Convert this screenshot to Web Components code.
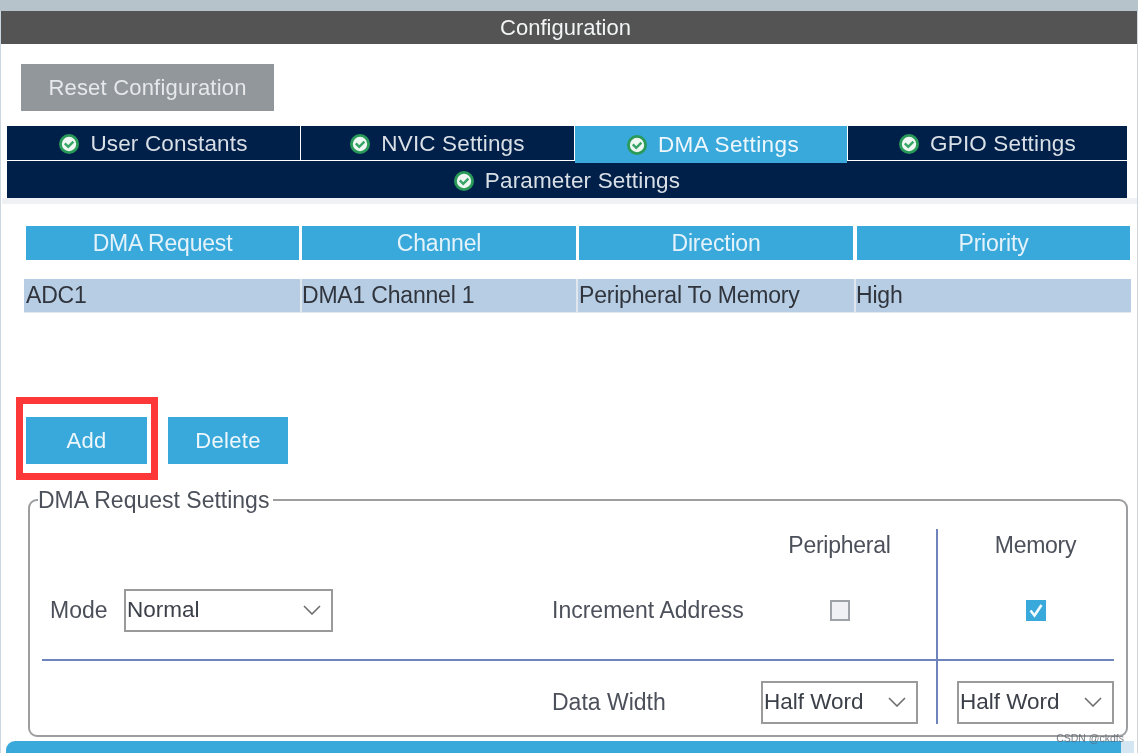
<!DOCTYPE html>
<html>
<head>
<meta charset="utf-8">
<title>Configuration</title>
<style>
  html, body { margin: 0; padding: 0; background: #fff; }
  body { width: 1138px; height: 753px; overflow: hidden; font-family: "Liberation Sans", Arial, sans-serif; }
</style>
</head>
<body>
<cube-config></cube-config>

<script>
class StatusIcon extends HTMLElement {
  connectedCallback() {
    this.attachShadow({ mode: 'open' });
    this.shadowRoot.innerHTML = `
      <style>
        :host { display: inline-block; width: 20px; height: 20px; line-height: 0; }
      </style>
      <svg width="20" height="20" viewBox="0 0 20 20">
        <circle cx="10" cy="10" r="10" fill="#2a9a58"/>
        <circle cx="10" cy="10" r="7.2" fill="#eef7f2"/>
        <path d="M5.8 9.4l3.4 3.4 5.2-5.2" fill="none" stroke="#35a466" stroke-width="2.4"/>
      </svg>`;
  }
}
customElements.define('status-icon', StatusIcon);

class CfgButton extends HTMLElement {
  connectedCallback() {
    this.attachShadow({ mode: 'open' });
    this.shadowRoot.innerHTML = `
      <style>
        :host {
          display: flex; align-items: center; justify-content: center;
          width: var(--w, 121px); height: 47px;
          background: var(--bg, #39a9dc);
          color: var(--fg, #eef7fc);
          font-size: 22px;
          letter-spacing: var(--ls, .35px);
        }
      </style>
      <slot></slot>`;
  }
}
customElements.define('cfg-button', CfgButton);

class CfgTab extends HTMLElement {
  connectedCallback() {
    this.attachShadow({ mode: 'open' });
    this.shadowRoot.innerHTML = `
      <style>
        :host {
          display: flex; align-items: center; justify-content: center; gap: 11px;
          box-sizing: border-box;
          padding-top: 2px;
          background: #012049;
          color: #d9dfe6;
          font-size: 22.5px;
          letter-spacing: .15px;
        }
        :host([active]) {
          background: #39a9dc;
          color: #eef7fc;
          margin-bottom: -3px;
          padding: 0 0 0 4px;
          letter-spacing: .4px;
          position: relative;
        }
      </style>
      <status-icon></status-icon><span><slot></slot></span>`;
  }
}
customElements.define('cfg-tab', CfgTab);

class CfgTabs extends HTMLElement {
  connectedCallback() {
    this.attachShadow({ mode: 'open' });
    this.shadowRoot.innerHTML = `
      <style>
        :host {
          display: grid;
          grid-template-columns: 293px 273px 272px 279px;
          grid-template-rows: 34px 37px;
          gap: 1px;
          margin: 15px 0 0 6px;
          width: 1120px;
        }
        .wide { grid-column: 1 / -1; }
      </style>
      <cfg-tab>User Constants</cfg-tab>
      <cfg-tab>NVIC Settings</cfg-tab>
      <cfg-tab active>DMA Settings</cfg-tab>
      <cfg-tab>GPIO Settings</cfg-tab>
      <cfg-tab class="wide">Parameter Settings</cfg-tab>`;
  }
}
customElements.define('cfg-tabs', CfgTabs);

class DmaTable extends HTMLElement {
  connectedCallback() {
    this.attachShadow({ mode: 'open' });
    this.shadowRoot.innerHTML = `
      <style>
        :host { display: block; margin: 22px 0 0 23px; width: 1107px; font-size: 23px; letter-spacing: -.2px; }
        .head {
          display: grid;
          grid-template-columns: 273px 274px 274px 273px;
          column-gap: 3px;
          margin-left: 2px;
          height: 34px;
          color: #e4f2fa;
        }
        .head div {
          background: #39a9dc;
          display: flex; align-items: center; justify-content: center;
        }
        .head div:last-child { margin-left: 1px; margin-right: -1px; }
        .row {
          display: grid;
          grid-template-columns: 276px 274px 276px 1fr;
          column-gap: 2px;
          margin-top: 19px;
          height: 33px;
          background: #dfe6ee;
          box-shadow: 0 1px 0 #e4e9f0;
          color: #30343c;
        }
        .row div {
          background: #b6cde4;
          display: flex; align-items: center;
        }
        .row div:first-child { padding-left: 2px; }
        .row div:nth-child(3) { padding-left: 1px; }
      </style>
      <div class="head"><div>DMA Request</div><div>Channel</div><div>Direction</div><div>Priority</div></div>
      <div class="row"><div>ADC1</div><div>DMA1 Channel 1</div><div>Peripheral To Memory</div><div>High</div></div>`;
  }
}
customElements.define('dma-table', DmaTable);

class DropSelect extends HTMLElement {
  connectedCallback() {
    this.attachShadow({ mode: 'open' });
    this.shadowRoot.innerHTML = `
      <style>
        :host {
          display: flex; align-items: center; justify-content: space-between;
          box-sizing: border-box;
          width: var(--w, 157px); height: 43px;
          border: 2px solid #9a9a9a;
          padding: 0 10px 1px 1px;
          background: #fff;
          color: #3c4049;
          font-size: 22.5px;
        }
        svg { display: block; }
      </style>
      <span><slot></slot></span>
      <svg width="18" height="10" viewBox="0 0 18 10"><path d="M1 1l8 8 8-8" fill="none" stroke="#6e6e6e" stroke-width="1.6"/></svg>`;
  }
}
customElements.define('drop-select', DropSelect);

class CheckBox extends HTMLElement {
  connectedCallback() {
    this.attachShadow({ mode: 'open' });
    const on = this.hasAttribute('checked');
    this.shadowRoot.innerHTML = `
      <style>
        :host {
          display: block; box-sizing: border-box; width: 20px; height: 21px;
          border: 2px solid #9fa3a8; background: #eff1f4;
        }
        :host([checked]) { border-color: #39a9dc; background: #39a9dc; }
        svg { display: block; }
      </style>
      ${on ? '<svg width="16" height="17" viewBox="0 0 16 17"><path d="M2.5 8.5l4 5L13.5 3" fill="none" stroke="#f2fafd" stroke-width="2.6"/></svg>' : ''}`;
  }
}
customElements.define('check-box', CheckBox);

class RequestSettings extends HTMLElement {
  connectedCallback() {
    this.attachShadow({ mode: 'open' });
    this.shadowRoot.innerHTML = `
      <style>
        :host { display: block; margin: 7px 0 0 27px; width: 1100px; color: #4c505a; font-size: 23px; }
        fieldset {
          box-sizing: border-box;
          height: 250px;
          margin: 0; min-width: 0;
          border: 2px solid #9c9ea0;
          border-radius: 9px;
          padding: 16px 12px 0 12px;
        }
        legend { padding: 0 4px 0 0; margin-left: -4px; line-height: 26px; }
        .grid {
          display: grid;
          grid-template-columns: 82px 209px 219px 209px 157px 18px 2px 19px 157px;
          grid-template-rows: 33px 97px 2px 63px;
          align-items: center;
        }
        .mode { grid-column: 1; grid-row: 2; padding-left: 8px; }
        .modesel { grid-column: 2; grid-row: 2; --w: 209px; }
        .inc { grid-column: 4; grid-row: 2; }
        .data { grid-column: 4; grid-row: 4; padding-top: 19px; }
        .pc { grid-column: 5; justify-self: center; }
        .mc { grid-column: 9; justify-self: center; }
        .r1 { grid-row: 1; letter-spacing: -.25px; }
        .r2 { grid-row: 2; }
        .r4 { grid-row: 4; align-self: end; }
        .vline { grid-column: 7; grid-row: 1 / -1; align-self: stretch; background: #6f83bd; width: 2px; }
        .h1 { grid-column: 1 / 7; grid-row: 3; height: 2px; background: #6f83bd; margin-right: -1px; }
        .h2 { grid-column: 8 / 10; grid-row: 3; height: 2px; background: #6f83bd; }
      </style>
      <fieldset>
        <legend>DMA Request Settings</legend>
        <div class="grid">
          <span class="pc r1">Peripheral</span>
          <span class="mc r1">Memory</span>
          <span class="vline"></span>
          <span class="mode">Mode</span>
          <drop-select class="modesel">Normal</drop-select>
          <span class="inc">Increment Address</span>
          <check-box class="pc r2"></check-box>
          <check-box class="mc r2" checked></check-box>
          <span class="h1"></span>
          <span class="h2"></span>
          <span class="data">Data Width</span>
          <drop-select class="pc r4">Half Word</drop-select>
          <drop-select class="mc r4">Half Word</drop-select>
        </div>
      </fieldset>`;
  }
}
customElements.define('request-settings', RequestSettings);

class CubeConfig extends HTMLElement {
  connectedCallback() {
    this.attachShadow({ mode: 'open' });
    this.shadowRoot.innerHTML = `
      <style>
        :host {
          display: block; position: relative;
          width: 1138px; height: 753px; overflow: hidden;
          box-sizing: border-box;
          padding: 11px 1px 0 1px;
          background: linear-gradient(#b6c3cb 11px, #ccd7e0 11px);
          filter: blur(.4px);
        }
        .panel { background: #fff; height: 742px; }
        .title {
          height: 33px; background: #535453; color: #f2f4f5;
          display: flex; align-items: center; justify-content: center;
          box-sizing: border-box;
          padding: 1px 7px 0 0;
          font-size: 22px;
        }
        .reset { margin: 20px 0 0 20px; --w: 253px; --bg: #92979c; --fg: #e6e8ea; --ls: .2px; }
        .strip { height: 6px; margin-left: 1px; background: #eff1f4; }
        .actions { display: flex; align-items: flex-start; margin: 85px 0 0 15px; }
        .mark { box-sizing: border-box; border: 7px solid #fe3838; padding: 13px 4px 9px 3px; }
        .del { margin: 20px 0 0 10px; --w: 120px; }
        .bottom {
          margin: 4px 3px 0 5px; height: 14px;
          background: linear-gradient(to right, #39a9dc 1115px, #d5e6f3 1115px);
          border-radius: 9px 0 0 0;
        }
        .wm {
          position: absolute; right: 14px; top: 732px;
          font-size: 10.5px; color: rgba(90,95,105,.8);
        }
      </style>
      <div class="panel">
        <div class="title">Configuration</div>
        <cfg-button class="reset">Reset Configuration</cfg-button>
        <cfg-tabs></cfg-tabs>
        <div class="strip"></div>
        <dma-table></dma-table>
        <div class="actions">
          <div class="mark"><cfg-button>Add</cfg-button></div>
          <cfg-button class="del">Delete</cfg-button>
        </div>
        <request-settings></request-settings>
        <div class="bottom"></div>
      </div>
      <span class="wm">CSDN @ckdfs</span>`;
  }
}
customElements.define('cube-config', CubeConfig);
</script>
</body>
</html>
